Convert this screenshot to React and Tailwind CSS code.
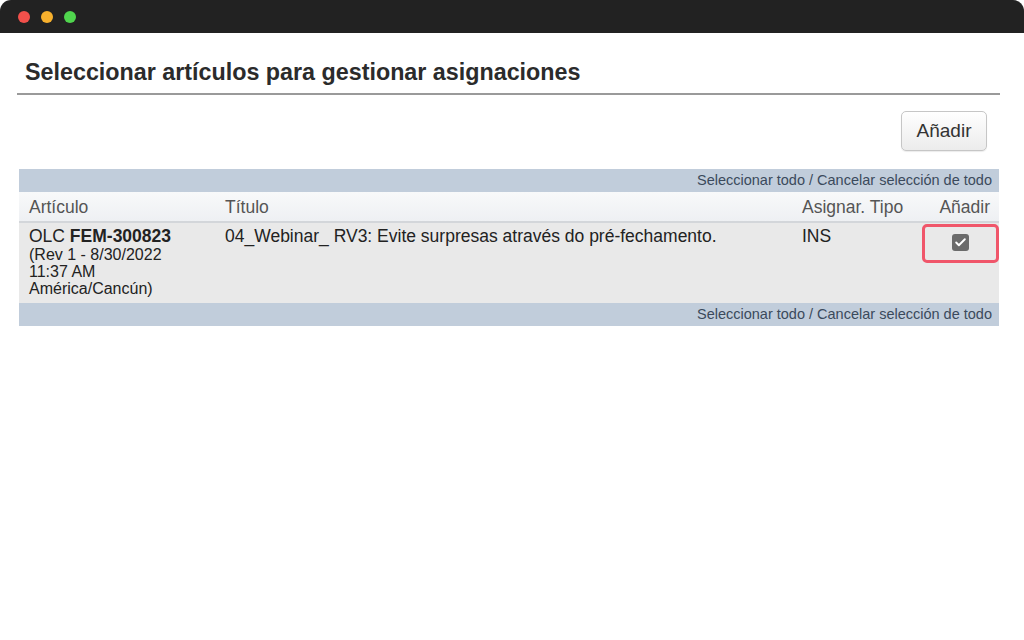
import { Check } from 'lucide-react'

const SELECT_ALL = 'Seleccionar todo / Cancelar selección de todo'

function SelectBar() {
  return (
    <div className="flex h-[23px] items-center justify-end bg-[#c1cddb] pr-[7px] pt-[1px] text-[14.5px] text-[#3b4a5c]">
      {SELECT_ALL}
    </div>
  )
}

export default function App() {
  return (
    <div className="h-[640px] w-[1024px] bg-white font-['Liberation_Sans',Arial,sans-serif]">
      <div className="flex h-[33px] items-center gap-[11px] rounded-t-[11px] bg-[#222222] pl-[18px]">
        <span className="h-[12px] w-[12px] rounded-full bg-[#f2504b]" />
        <span className="h-[12px] w-[12px] rounded-full bg-[#f7b02d]" />
        <span className="h-[12px] w-[12px] rounded-full bg-[#50d54e]" />
      </div>

      <div className="pl-[17px] pr-[24px] pt-[25px]">
        <h1 className="border-b-2 border-[#9a9a9a] pb-[7px] pl-[8px] text-[23.3px] font-bold leading-[28px] text-[#2b2b2b]">
          Seleccionar artículos para gestionar asignaciones
        </h1>

        <div className="flex justify-end pr-[13px] pt-[16px]">
          <button className="h-[40px] w-[86px] rounded-[5px] border border-[#c6c6c6] bg-linear-to-b from-white to-[#ececec] text-[19px] text-[#333] shadow-[0_1px_1px_rgba(0,0,0,0.08)]">
            Añadir
          </button>
        </div>

        <div className="ml-[2px] mt-[18px] w-[980px]">
          <SelectBar />
          <div className="flex h-[31px] items-center border-b-2 border-[#d3d6da] bg-linear-to-b from-[#f8f9fa] to-[#eef0f3] pt-[1px] text-[17.5px] text-[#555]">
            <div className="w-[206px] pl-[10px]">Artículo</div>
            <div className="flex-1">Título</div>
            <div className="w-[120px]">Asignar. Tipo</div>
            <div className="w-[77px] pr-[9px] text-right">Añadir</div>
          </div>
          <div className="flex h-[80px] bg-[#e9e9e9] text-[17.5px] text-[#222]">
            <div className="w-[206px] pl-[10px] pt-[4px] leading-[17px]">
              <div className="leading-[19px]">
                OLC <span className="font-bold">FEM-300823</span>
              </div>
              <div className="text-[16px]">(Rev 1 - 8/30/2022</div>
              <div className="text-[16px]">11:37 AM</div>
              <div className="text-[16px]">América/Cancún)</div>
            </div>
            <div className="flex-1 pt-[4px] leading-[19px]">
              04_Webinar_ RV3: Evite surpresas através do pré-fechamento.
            </div>
            <div className="w-[120px] pt-[4px] leading-[19px]">INS</div>
            <div className="flex w-[77px] items-start pt-[1px]">
              <div className="flex h-[39px] w-[77px] items-center justify-center rounded-[5px] border-[3px] border-[#f0566a]">
                <span className="mb-[3px] flex h-[17px] w-[17px] items-center justify-center rounded-[3px] bg-[#6b6b6b]">
                  <Check size={13} strokeWidth={3.5} className="text-white" />
                </span>
              </div>
            </div>
          </div>
          <SelectBar />
        </div>
      </div>
    </div>
  )
}
